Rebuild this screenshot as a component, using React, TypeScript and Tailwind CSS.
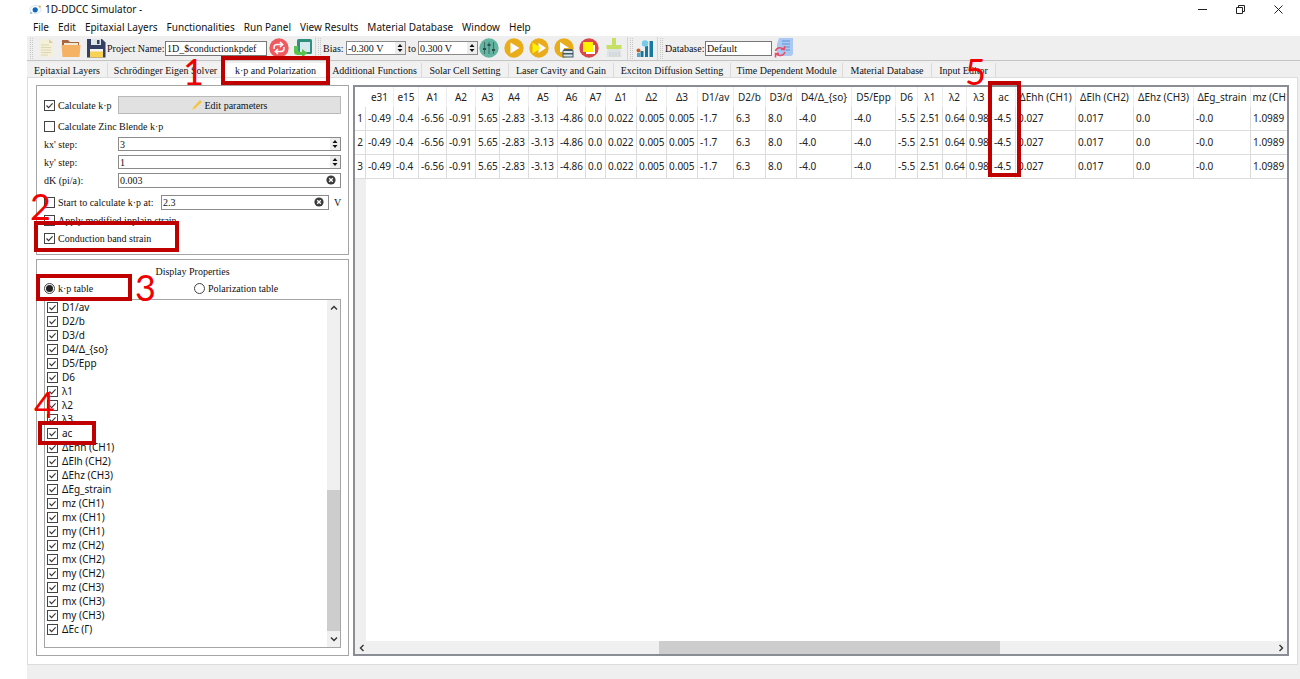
import type { ReactNode } from 'react';

const sans = "font-['Noto_Sans','Liberation_Sans',sans-serif]";
const serif = "font-['Liberation_Serif','DejaVu_Serif',serif]";

const menus = [
  'File', 'Edit', 'Epitaxial Layers', 'Functionalities', 'Run Panel',
  'View Results', 'Material Database', 'Window', 'Help',
];

const tabs = [
  { name: 'Epitaxial Layers', width: 'w-[81px]' },
  { name: 'Schrödinger Eigen Solver', width: 'w-[116px]' },
  { name: 'k·p and Polarization', width: 'w-[104px]', active: true },
  { name: 'Additional Functions', width: 'w-[94px]' },
  { name: 'Solar Cell Setting', width: 'w-[87px]' },
  { name: 'Laser Cavity and Gain', width: 'w-[105px]' },
  { name: 'Exciton Diffusion Setting', width: 'w-[117px]' },
  { name: 'Time Dependent Module', width: 'w-[112px]' },
  { name: 'Material Database', width: 'w-[89px]' },
  { name: 'Input Editor', width: 'w-[64px]' },
];

const properties = [
  'D1/av', 'D2/b', 'D3/d', 'D4/Δ_{so}', 'D5/Epp', 'D6', 'λ1', 'λ2', 'λ3', 'ac',
  'ΔEhh (CH1)', 'ΔElh (CH2)', 'ΔEhz (CH3)', 'ΔEg_strain',
  'mz (CH1)', 'mx (CH1)', 'my (CH1)', 'mz (CH2)', 'mx (CH2)', 'my (CH2)',
  'mz (CH3)', 'mx (CH3)', 'my (CH3)', 'ΔEc (Γ)',
];

const columns = [
  { name: 'e31', value: '-0.49', width: 'w-[28px]' },
  { name: 'e15', value: '-0.4', width: 'w-[25px]' },
  { name: 'A1', value: '-6.56', width: 'w-[28px]' },
  { name: 'A2', value: '-0.91', width: 'w-[29px]' },
  { name: 'A3', value: '5.65', width: 'w-[24px]' },
  { name: 'A4', value: '-2.83', width: 'w-[29px]' },
  { name: 'A5', value: '-3.13', width: 'w-[29px]' },
  { name: 'A6', value: '-4.86', width: 'w-[28px]' },
  { name: 'A7', value: '0.0', width: 'w-[20px]' },
  { name: 'Δ1', value: '0.022', width: 'w-[31px]' },
  { name: 'Δ2', value: '0.005', width: 'w-[30px]' },
  { name: 'Δ3', value: '0.005', width: 'w-[31px]' },
  { name: 'D1/av', value: '-1.7', width: 'w-[36px]' },
  { name: 'D2/b', value: '6.3', width: 'w-[32px]' },
  { name: 'D3/d', value: '8.0', width: 'w-[31px]' },
  { name: 'D4/Δ_{so}', value: '-4.0', width: 'w-[55px]' },
  { name: 'D5/Epp', value: '-4.0', width: 'w-[44px]' },
  { name: 'D6', value: '-5.5', width: 'w-[22px]' },
  { name: 'λ1', value: '2.51', width: 'w-[25px]' },
  { name: 'λ2', value: '0.64', width: 'w-[24px]' },
  { name: 'λ3', value: '0.98', width: 'w-[25px]' },
  { name: 'ac', value: '-4.5', width: 'w-[24px]' },
  { name: 'ΔEhh (CH1)', value: '0.027', width: 'w-[60px]' },
  { name: 'ΔElh (CH2)', value: '0.017', width: 'w-[58px]' },
  { name: 'ΔEhz (CH3)', value: '0.0', width: 'w-[60px]' },
  { name: 'ΔEg_strain', value: '-0.0', width: 'w-[57px]' },
  { name: 'mz (CH1)', value: '1.0989', width: 'w-[46px]' },
];

const marks = [
  { n: '1', box: 'left-[221px] top-[56px] w-[109px] h-[29px]', num: 'left-[183px] top-[53px]' },
  { n: '2', box: 'left-[34px] top-[221px] w-[145px] h-[31px]', num: 'left-[30px] top-[188px]' },
  { n: '3', box: 'left-[36px] top-[274px] w-[96px] h-[27px]', num: 'left-[135px] top-[269px]' },
  { n: '4', box: 'left-[38px] top-[421px] w-[58px] h-[24px]', num: 'left-[34px] top-[386px]' },
  { n: '5', box: 'left-[988px] top-[81px] w-[33px] h-[96px]', num: 'left-[965px] top-[53px]' },
];

function Check({ label, checked = false, className = 'gap-[3px]' }: { label: string; checked?: boolean; className?: string }) {
  return (
    <label className={`flex items-center whitespace-nowrap ${className}`}>
      <span className="grid size-[11px] shrink-0">
        <input
          type="checkbox"
          defaultChecked={checked}
          className="peer col-start-1 row-start-1 size-[11px] appearance-none border border-[#444] bg-white"
        />
        <svg viewBox="0 0 11 11" className="pointer-events-none col-start-1 row-start-1 hidden size-[11px] peer-checked:block">
          <path d="M2.5 5.5 4.6 7.6 8.6 3.4" fill="none" stroke="#333" strokeWidth="1.1" />
        </svg>
      </span>
      {label}
    </label>
  );
}

function Radio({ label, checked = false, className }: { label: string; checked?: boolean; className: string }) {
  return (
    <label className={`flex items-center gap-[3px] whitespace-nowrap ${className}`}>
      <span className="grid size-[11px] shrink-0">
        <input
          type="radio"
          name="display"
          defaultChecked={checked}
          className="peer col-start-1 row-start-1 size-[11px] appearance-none rounded-full border border-[#444] bg-white"
        />
        <span className="pointer-events-none col-start-1 row-start-1 m-auto hidden size-[7px] rounded-full bg-[#222] peer-checked:block" />
      </span>
      {label}
    </label>
  );
}

function Spin({ id, value, className }: { id: string; value: string; className: string }) {
  return (
    <span className={`flex h-[14px] border border-[#8a8a8a] bg-white ${className}`}>
      <input id={id} defaultValue={value} className="min-w-0 flex-1 pl-px outline-none" />
      <span className="flex w-[10px] items-center justify-center bg-[#ededed]">
        <svg viewBox="0 0 8 10" className="h-[10px] w-2">
          <path d="M1.5 4 4 1 6.5 4zM1.5 6 4 9 6.5 6z" fill="#111" />
        </svg>
      </span>
    </span>
  );
}

function ClearField({ id, value }: { id: string; value: string }) {
  return (
    <span className="flex h-[15px] min-w-0 flex-1 items-center border border-[#8a8a8a] bg-white pr-1">
      <input id={id} defaultValue={value} className="min-w-0 flex-1 pl-px outline-none" />
      <button aria-label="Clear">
        <svg viewBox="0 0 10 10" className="size-[10px]">
          <circle cx="5" cy="5" r="4.6" fill="#3c3c3c" />
          <path d="M3.2 3.2 6.8 6.8M6.8 3.2 3.2 6.8" stroke="#fff" strokeWidth="1.3" />
        </svg>
      </button>
    </span>
  );
}

function Chevron({ d, label, className }: { d: string; label: string; className: string }) {
  return (
    <button aria-label={label} className={`flex shrink-0 items-center justify-center ${className}`}>
      <svg viewBox="0 0 8 8" className="size-2">
        <path d={d} fill="none" stroke="#333" strokeWidth="1.4" />
      </svg>
    </button>
  );
}

function Tool({ label, children }: { label: string; children: ReactNode }) {
  return (
    <button aria-label={label} className="shrink-0">
      <svg viewBox="0 0 20 20" className="size-5">{children}</svg>
    </button>
  );
}

function Grip() {
  return <span className="h-[21px] w-[3px] shrink-0 border-x border-dotted border-[#c8c8c8]" />;
}

function Divider() {
  return <span className="h-[23px] w-px shrink-0 bg-[#d4d4d4]" />;
}

function TitleBar() {
  return (
    <header className="flex h-[18px] items-center justify-between pr-[17px] pl-[2px] text-[10px]">
      <div className="flex items-center gap-[3px]">
        <svg viewBox="0 0 13 11" className="h-[11px] w-[13px]">
          <ellipse cx="6.5" cy="5.5" rx="5.6" ry="4" fill="none" stroke="#cfe3f3" />
          <circle cx="6.2" cy="5.8" r="2.6" fill="#1268b8" />
          <circle cx="10.8" cy="2.6" r="1.1" fill="#e8a93a" />
          <circle cx="2" cy="9" r="1" fill="#7ab8e4" />
        </svg>
        <span>1D-DDCC Simulator -</span>
      </div>
      <div className="flex items-center gap-[29px]">
        <button aria-label="Minimize">
          <svg viewBox="0 0 9 9" className="size-[9px]"><path d="M0 4.5H9" stroke="#222" /></svg>
        </button>
        <button aria-label="Restore">
          <svg viewBox="0 0 9 9" className="size-[9px]">
            <path d="M.5 2.5H6.5V8.5H.5zM2.5 2.5V.5H8.5V6.5H6.5" fill="none" stroke="#222" />
          </svg>
        </button>
        <button aria-label="Close">
          <svg viewBox="0 0 9 9" className="size-[9px]"><path d="M.5.5 8.5 8.5M8.5.5.5 8.5" stroke="#222" /></svg>
        </button>
      </div>
    </header>
  );
}

function ToolBar() {
  return (
    <div className={`flex h-[25px] items-center border-b border-[#c4c4c4] bg-[#efefef] pl-[3px] text-[10px] ${serif}`}>
      <Grip />
      <div className="mr-px ml-[3px] flex items-center gap-[5px]">
        <Tool label="New">
          <path d="M3 1H13L17 5V19H3z" fill="#f4efd8" />
          <path d="M13 1V5H17z" fill="#d9cf9f" />
          <path d="M5 7H13M5 9.5H15M5 12H15M5 14.5H15M5 17H12" stroke="#ddd6b4" />
        </Tool>
        <Tool label="Open">
          <path d="M1 2H7L9 4H18V10H1z" fill="#a9673f" />
          <path d="M3 5H17V9H3z" fill="#f2ead9" />
          <path d="M.5 7H19.5L18.5 19H1.5z" fill="#f5b164" />
        </Tool>
        <Tool label="Save">
          <path d="M1 1H16L19.5 4.5V19.5H1z" fill="#343f63" />
          <path d="M5 1H15V7H5z" fill="#dfe6ea" />
          <path d="M11 2H13.5V6H11z" fill="#343f63" />
          <path d="M4 11H17V19.5H4z" fill="#f7d154" />
          <path d="M4 11H17V13.5H4z" fill="#f3f3f3" />
        </Tool>
      </div>
      <label htmlFor="project" className="w-[58px] whitespace-nowrap">Project Name:</label>
      <input id="project" defaultValue="1D_$conductionkpdef" className="h-[15px] w-[102px] border border-[#777] bg-white pl-px" />
      <div className="mx-[2px] flex items-center gap-1">
        <Tool label="Reload">
          <circle cx="10" cy="10" r="9.7" fill="#ee5a5f" />
          <path d="M5 11V9.5Q5 6.500 8 6.5H13M15 9V10.5Q15 13.5 12 13.5H7M11 4 13.7 6.5 11 9M9 11 6.3 13.5 9 16" fill="none" stroke="#fff" strokeWidth="1.5" />
        </Tool>
        <Tool label="Restore project">
          <rect x="4" y="1" width="15" height="15" rx="1.5" fill="#2f8f7d" />
          <rect x="7" y="4" width="10" height="10" fill="#d5e9ee" />
          <path d="M1 8V14Q1 17 5 17H9V19.5L14.5 15 9 11V14H7Q5 14 5 12V8z" fill="#5cc24e" />
        </Tool>
      </div>
      <Divider />
      <span className="w-[2px]" />
      <Grip />
      <label htmlFor="bias-from" className="ml-[2px] w-[23px]">Bias:</label>
      <Spin id="bias-from" value="-0.300 V" className="w-[60px]" />
      <label htmlFor="bias-to" className="w-3 text-center">to</label>
      <Spin id="bias-to" value="0.300 V" className="w-[60px]" />
      <div className="mx-px flex items-center gap-[5px]">
        <Tool label="Settings">
          <circle cx="10" cy="10" r="9.7" fill="#63b5a2" />
          <path d="M5.5 4V16M10 4V16M14.5 4V16" stroke="#41706a" strokeWidth="1.1" />
          <path d="M4 11H7M8.5 7H11.5M13 12H16" stroke="#2b4d48" strokeWidth="2.2" />
        </Tool>
        <Tool label="Run">
          <circle cx="10" cy="10" r="9.7" fill="#e9ad1c" />
          <path d="M6.5 4.5 15.5 10 6.5 15.5z" fill="#fff" />
        </Tool>
        <Tool label="Run all">
          <circle cx="10" cy="10" r="9.7" fill="#e9ad1c" />
          <path d="M9.5 5 17 10 9.5 15z" fill="#fff" />
          <path d="M3.5 4.5 12 10 3.5 15.5z" fill="#fff200" />
        </Tool>
        <Tool label="Run and save">
          <circle cx="10" cy="10" r="9.7" fill="#e9ad1c" />
          <path d="M6 4 15 10H10V14H6z" fill="#fff" />
          <path d="M10 11H18L19.5 13V19.5H8.5V13z" fill="#455a64" />
          <path d="M9.5 13H18.5V15H9.5zM9.5 16.5H18.5V18.5H9.5z" fill="#d8e6ea" />
        </Tool>
        <Tool label="Stop">
          <circle cx="10" cy="10" r="9.7" fill="#d9484b" />
          <rect x="7" y="7" width="9" height="9" fill="#fff" />
          <rect x="4" y="4" width="10" height="10" fill="#fff200" />
        </Tool>
        <Tool label="Clean">
          <path d="M8 0H12V7H17.5V11H2.5V7H8z" fill="#c5e063" />
          <path d="M3.5 11H16.5L17.5 19H2.5z" fill="#dde2e4" />
          <path d="M6 14V19M9 14V19M12 14V19M15 14V19" stroke="#c8cfd2" />
        </Tool>
      </div>
      <span className="w-[2px]" />
      <Divider />
      <span className="w-[2px]" />
      <Grip />
      <span className="w-[2px]" />
      <Tool label="Plot">
        <path d="M14.5 3H18V19H14.5zM10 8H13V19H10zM5.5 13H8.5V19H5.5z" fill="#17799f" />
        <circle cx="10" cy="5.5" r="3.2" fill="#78cbe8" />
        <circle cx="3.5" cy="12.5" r="2" fill="#c4602c" />
        <path d="M2 15H5V19H2z" fill="#4fa9c9" />
      </Tool>
      <span className="w-[2px]" />
      <Divider />
      <span className="w-[2px]" />
      <Grip />
      <label htmlFor="database" className="ml-[2px] w-[40px]">Database:</label>
      <input id="database" defaultValue="Default" className="h-[15px] w-[67px] border border-[#777] bg-white pl-px" />
      <span className="w-[2px]" />
      <Tool label="Refresh database">
        <path d="M5 0H19V15Q19 18 16 18H3V6z" fill="#a9c9f3" />
        <path d="M8 3H16M8 6H16M10 9H16M12 12H16" stroke="#5f92d8" />
        <path d="M1.500 13Q3 9 7 10L10 11M10.5 8V11.5H7M11 14Q9.5 18 5.5 17.5L2 16M1.5 19.5V15.5H5" fill="none" stroke="#e2506c" strokeWidth="1.6" />
      </Tool>
    </div>
  );
}

function KpSettings() {
  return (
    <section className="flex flex-col border border-[#a5a5a5] px-[7px] pt-[10px] pb-[7px]">
      <div className="mb-[3px] flex h-[18px] items-center">
        <Check label="Calculate k·p" checked className="w-[74px] gap-[3px]" />
        <button className="flex h-[18px] flex-1 items-center justify-center gap-px border border-[#b9b9b9] bg-[#e1e1e1]">
          <svg viewBox="0 0 12 12" className="size-3">
            <path d="M1 11 2 8.5 9 1 11 3 3.5 10z" fill="#f4c542" />
            <path d="M1 11 2 8.5 3.5 10z" fill="#e9dcae" />
          </svg>
          Edit parameters
        </button>
      </div>
      <div className="flex h-[18px] items-center">
        <Check label="Calculate Zinc Blende k·p" />
      </div>
      <div className="flex h-[18px] items-center">
        <label htmlFor="kx" className="w-[74px]">kx' step:</label>
        <Spin id="kx" value="3" className="flex-1" />
      </div>
      <div className="flex h-[18px] items-center">
        <label htmlFor="ky" className="w-[74px]">ky' step:</label>
        <Spin id="ky" value="1" className="flex-1" />
      </div>
      <div className="mb-1 flex h-[18px] items-center">
        <label htmlFor="dk" className="w-[74px]">dK (pi/a):</label>
        <ClearField id="dk" value="0.003" />
      </div>
      <div className="flex h-[18px] items-center">
        <Check label="Start to calculate k·p at:" className="w-[117px] gap-[3px]" />
        <ClearField id="start" value="2.3" />
        <label htmlFor="start" className="w-3 pl-[5px]">V</label>
      </div>
      <div className="flex h-[18px] items-center">
        <Check label="Apply modified inplain strain" />
      </div>
      <div className="flex h-[18px] items-center">
        <Check label="Conduction band strain" checked />
      </div>
    </section>
  );
}

function DisplayProperties() {
  return (
    <section className="flex flex-1 flex-col border border-[#a5a5a5] px-[7px] pt-1 pb-[7px]">
      <h2 className="h-4 text-center leading-4">Display Properties</h2>
      <div className="mb-[3px] flex h-4 items-center">
        <Radio label="k·p table" checked className="w-[150px]" />
        <Radio label="Polarization table" className="flex-1" />
      </div>
      <div className="flex flex-1 border border-[#a5a5a5]">
        <ul className={`flex-1 pl-[2px] text-[10px] leading-[14px] ${sans}`}>
          {properties.map((name) => (
            <li key={name} className="h-[14px]">
              <Check label={name} checked className="gap-1" />
            </li>
          ))}
        </ul>
        <div className="flex w-[13px] flex-col bg-[#f0f0f0]">
          <Chevron label="Scroll up" d="M1 5.5 4 2.5 7 5.5" className="h-4" />
          <span className="grow-[175]" />
          <span className="grow-[141] bg-[#cdcdcd]" />
          <Chevron label="Scroll down" d="M1 2.5 4 5.5 7 2.5" className="h-4" />
        </div>
      </div>
    </section>
  );
}

function KpTable() {
  return (
    <section className={`flex min-w-0 flex-1 flex-col border-2 border-[#8b8d94] text-[10px] text-[#222] ${sans}`}>
      <div className="flex min-h-0 flex-1 flex-col overflow-hidden">
        <table className="w-[942px] table-fixed border-separate border-spacing-0">
          <colgroup>
            <col className="w-[11px]" />
            {columns.map((c) => <col key={c.name} className={c.width} />)}
          </colgroup>
          <thead>
            <tr className="h-5">
              <th />
              {columns.map((c) => (
                <th key={c.name} className="border-r border-[#ececec] p-0 text-center font-normal whitespace-nowrap">{c.name}</th>
              ))}
            </tr>
          </thead>
          <tbody>
            {[1, 2, 3].map((row) => (
              <tr key={row} className="h-6">
                <th className="border-r border-b border-[#dcdcdc] p-0 text-center font-normal">{row}</th>
                {columns.map((c) => (
                  <td key={c.name} className="border-r border-b border-[#dcdcdc] p-0 pl-[2px] whitespace-nowrap">{c.value}</td>
                ))}
              </tr>
            ))}
          </tbody>
        </table>
        <span className="w-[11px] flex-1 bg-[#efefef]" />
      </div>
      <div className="flex h-[13px] bg-[#f0f0f0]">
        <Chevron label="Scroll left" d="M5.5 1 2.5 4 5.5 7" className="w-[13px]" />
        <span className="grow-[291]" />
        <span className="grow-[342] bg-[#cdcdcd]" />
        <span className="grow-[274]" />
        <Chevron label="Scroll right" d="M2.5 1 5.5 4 2.5 7" className="w-[13px]" />
      </div>
    </section>
  );
}

export default function App() {
  return (
    <div className={`relative flex min-h-screen flex-col overflow-hidden bg-white pl-[27px] text-[#111] ${sans}`}>
      <TitleBar />
      <nav className="flex h-[18px] items-center gap-[9px] pl-[6px] text-[10px]">
        {menus.map((m) => <button key={m} className="whitespace-nowrap">{m}</button>)}
      </nav>
      <ToolBar />
      <main className={`flex flex-1 flex-col bg-[#efefef] pt-[2px] pr-[2px] text-[10px] ${serif}`}>
        <div role="tablist" className="flex h-[14px]">
          {tabs.map((t) => (
            <button
              key={t.name}
              role="tab"
              aria-selected={!!t.active}
              className={`shrink-0 border-r border-[#dadada] whitespace-nowrap ${t.width} ${t.active ? 'bg-white' : 'bg-[#f1f1f1]'}`}
            >
              {t.name}
            </button>
          ))}
        </div>
        <div className="flex flex-1 gap-1 border border-[#dcdcdc] bg-white p-2 pt-[7px]">
          <div className="flex w-[313px] shrink-0 flex-col gap-1">
            <KpSettings />
            <DisplayProperties />
          </div>
          <KpTable />
        </div>
      </main>
      <footer className="h-[14px] bg-[#efefef]" />

      {marks.map((m) => (
        <div key={m.n} className="pointer-events-none">
          <span className={`absolute border-4 border-[#c00000] ${m.box}`} />
          <span className={`absolute font-['Lato',sans-serif] text-[36px] leading-9 text-[#f00000] ${m.num}`}>{m.n}</span>
        </div>
      ))}
    </div>
  );
}
